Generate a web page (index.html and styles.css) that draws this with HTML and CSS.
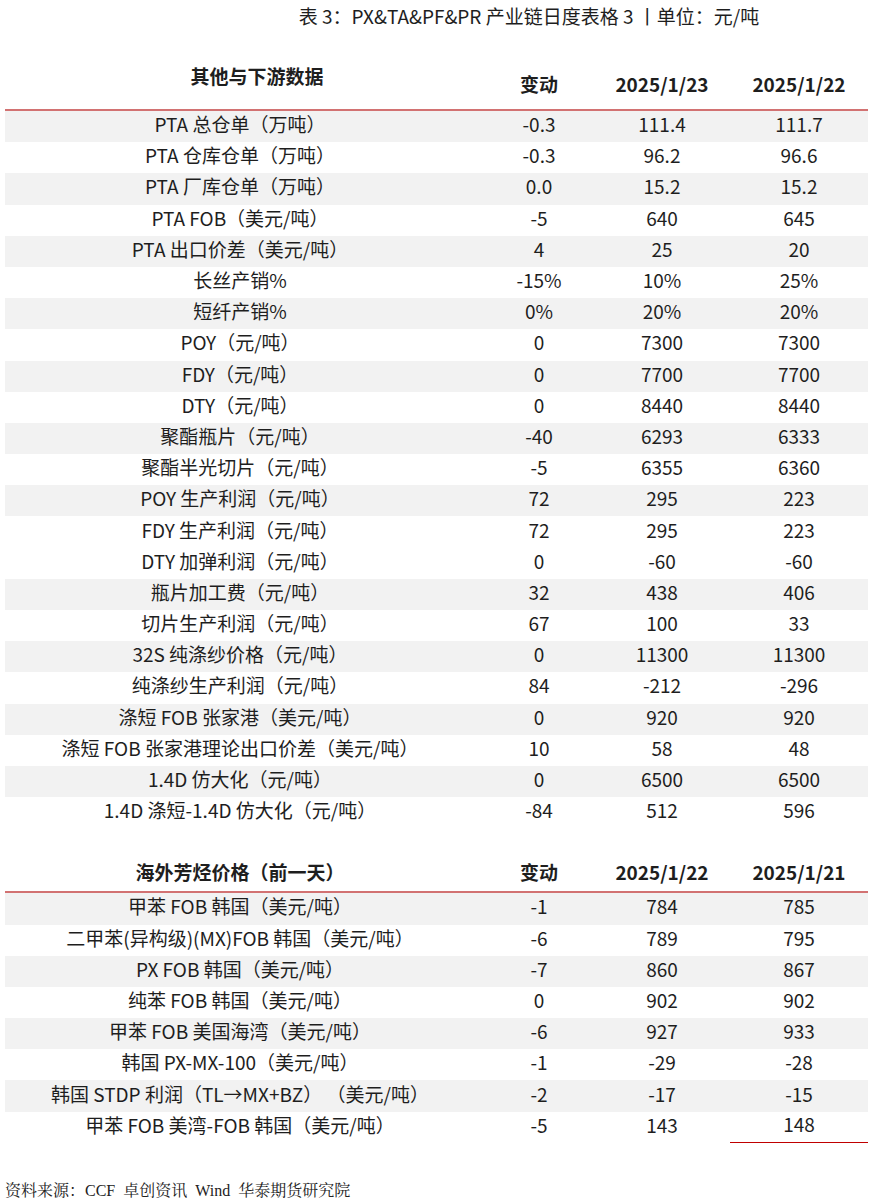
FILE: index.html
```html
<!DOCTYPE html>
<html lang="zh-CN">
<head>
<meta charset="utf-8">
<title>表 3：PX&amp;TA&amp;PF&amp;PR 产业链日度表格 3</title>
<link rel="stylesheet" href="styles.css">
</head>
<body>
<div class="page">
  <div class="title">表 3：PX&amp;TA&amp;PF&amp;PR 产业链日度表格 3 丨单位：元/吨</div>

  <div class="table">
    <div class="head head-first">
      <div class="c c1 label-raised">其他与下游数据</div>
      <div class="c c2">变动</div>
      <div class="c c3">2025/1/23</div>
      <div class="c c4">2025/1/22</div>
    </div>
    <div class="row shade"><div class="c c1">PTA 总仓单（万吨）</div><div class="c c2">-0.3</div><div class="c c3">111.4</div><div class="c c4">111.7</div></div>
    <div class="row"><div class="c c1">PTA 仓库仓单（万吨）</div><div class="c c2">-0.3</div><div class="c c3">96.2</div><div class="c c4">96.6</div></div>
    <div class="row shade"><div class="c c1">PTA 厂库仓单（万吨）</div><div class="c c2">0.0</div><div class="c c3">15.2</div><div class="c c4">15.2</div></div>
    <div class="row"><div class="c c1">PTA FOB（美元/吨）</div><div class="c c2">-5</div><div class="c c3">640</div><div class="c c4">645</div></div>
    <div class="row shade"><div class="c c1">PTA 出口价差（美元/吨）</div><div class="c c2">4</div><div class="c c3">25</div><div class="c c4">20</div></div>
    <div class="row"><div class="c c1">长丝产销%</div><div class="c c2">-15%</div><div class="c c3">10%</div><div class="c c4">25%</div></div>
    <div class="row shade"><div class="c c1">短纤产销%</div><div class="c c2">0%</div><div class="c c3">20%</div><div class="c c4">20%</div></div>
    <div class="row"><div class="c c1">POY（元/吨）</div><div class="c c2">0</div><div class="c c3">7300</div><div class="c c4">7300</div></div>
    <div class="row shade"><div class="c c1">FDY（元/吨）</div><div class="c c2">0</div><div class="c c3">7700</div><div class="c c4">7700</div></div>
    <div class="row"><div class="c c1">DTY（元/吨）</div><div class="c c2">0</div><div class="c c3">8440</div><div class="c c4">8440</div></div>
    <div class="row shade"><div class="c c1">聚酯瓶片（元/吨）</div><div class="c c2">-40</div><div class="c c3">6293</div><div class="c c4">6333</div></div>
    <div class="row"><div class="c c1">聚酯半光切片（元/吨）</div><div class="c c2">-5</div><div class="c c3">6355</div><div class="c c4">6360</div></div>
    <div class="row shade"><div class="c c1">POY 生产利润（元/吨）</div><div class="c c2">72</div><div class="c c3">295</div><div class="c c4">223</div></div>
    <div class="row"><div class="c c1">FDY 生产利润（元/吨）</div><div class="c c2">72</div><div class="c c3">295</div><div class="c c4">223</div></div>
    <div class="row"><div class="c c1">DTY 加弹利润（元/吨）</div><div class="c c2">0</div><div class="c c3">-60</div><div class="c c4">-60</div></div>
    <div class="row shade"><div class="c c1">瓶片加工费（元/吨）</div><div class="c c2">32</div><div class="c c3">438</div><div class="c c4">406</div></div>
    <div class="row"><div class="c c1">切片生产利润（元/吨）</div><div class="c c2">67</div><div class="c c3">100</div><div class="c c4">33</div></div>
    <div class="row shade"><div class="c c1">32S 纯涤纱价格（元/吨）</div><div class="c c2">0</div><div class="c c3">11300</div><div class="c c4">11300</div></div>
    <div class="row"><div class="c c1">纯涤纱生产利润（元/吨）</div><div class="c c2">84</div><div class="c c3">-212</div><div class="c c4">-296</div></div>
    <div class="row shade"><div class="c c1">涤短 FOB 张家港（美元/吨）</div><div class="c c2">0</div><div class="c c3">920</div><div class="c c4">920</div></div>
    <div class="row"><div class="c c1">涤短 FOB 张家港理论出口价差（美元/吨）</div><div class="c c2">10</div><div class="c c3">58</div><div class="c c4">48</div></div>
    <div class="row shade"><div class="c c1">1.4D 仿大化（元/吨）</div><div class="c c2">0</div><div class="c c3">6500</div><div class="c c4">6500</div></div>
    <div class="row"><div class="c c1">1.4D 涤短-1.4D 仿大化（元/吨）</div><div class="c c2">-84</div><div class="c c3">512</div><div class="c c4">596</div></div>

    <div class="head head-second">
      <div class="c c1">海外芳烃价格（前一天）</div>
      <div class="c c2">变动</div>
      <div class="c c3">2025/1/22</div>
      <div class="c c4">2025/1/21</div>
    </div>
    <div class="row shade"><div class="c c1">甲苯 FOB 韩国（美元/吨）</div><div class="c c2">-1</div><div class="c c3">784</div><div class="c c4">785</div></div>
    <div class="row"><div class="c c1">二甲苯(异构级)(MX)FOB 韩国（美元/吨）</div><div class="c c2">-6</div><div class="c c3">789</div><div class="c c4">795</div></div>
    <div class="row shade"><div class="c c1">PX FOB 韩国（美元/吨）</div><div class="c c2">-7</div><div class="c c3">860</div><div class="c c4">867</div></div>
    <div class="row"><div class="c c1">纯苯 FOB 韩国（美元/吨）</div><div class="c c2">0</div><div class="c c3">902</div><div class="c c4">902</div></div>
    <div class="row shade"><div class="c c1">甲苯 FOB 美国海湾（美元/吨）</div><div class="c c2">-6</div><div class="c c3">927</div><div class="c c4">933</div></div>
    <div class="row"><div class="c c1">韩国 PX-MX-100（美元/吨）</div><div class="c c2">-1</div><div class="c c3">-29</div><div class="c c4">-28</div></div>
    <div class="row shade"><div class="c c1">韩国 STDP 利润（TL→MX+BZ）&nbsp;（美元/吨）</div><div class="c c2">-2</div><div class="c c3">-17</div><div class="c c4">-15</div></div>
    <div class="row"><div class="c c1">甲苯 FOB 美湾-FOB 韩国（美元/吨）</div><div class="c c2">-5</div><div class="c c3">143</div><div class="c c4 underline">148</div></div>
  </div>

  <div class="source">资料来源：CCF&nbsp; 卓创资讯&nbsp; Wind&nbsp; 华泰期货研究院</div>
</div>
</body>
</html>
```

FILE: styles.css
```css
html, body {
  margin: 0;
  padding: 0;
  background: #ffffff;
}

.page {
  width: 875px;
  font-family: "Noto Sans CJK SC", "Noto Sans", sans-serif;
  color: #1e1e1e;
}

.title {
  height: 32px;
  line-height: 32px;
  padding-left: 183px;
  text-align: center;
  font-size: 19px;
  font-weight: 400;
}

.table {
  margin: 0 7px 0 5px;
  display: flex;
  flex-direction: column;
}

.row,
.head {
  display: grid;
  grid-template-columns: 470px 128px 127px 138px;
  font-size: 19px;
  line-height: 24px;
}

.row {
  height: 31.2px;
}

.row.shade {
  background: #f2f2f2;
}

.c {
  display: flex;
  align-items: center;
  justify-content: center;
  white-space: nowrap;
  box-sizing: border-box;
}

.row .c {
  padding-bottom: 5px;
}

.c3 {
  padding-right: 9px;
}

.head {
  font-weight: 700;
  border-bottom: 2px solid #d27272;
}

.head .c {
  align-items: flex-end;
}

.head-first {
  height: 77px;
}

.head-first .c {
  padding-bottom: 13px;
}

.head-first .label-raised {
  padding-bottom: 21px;
  padding-left: 34px;
}

.head-second {
  height: 63px;
}

.head-second .c {
  padding-bottom: 7px;
}

.underline {
  border-bottom: 1px solid #c00000;
}

.source {
  margin-top: 38px;
  padding-left: 5px;
  font-family: "Liberation Serif", "Noto Serif CJK SC", "Noto Sans CJK SC", serif;
  font-size: 16px;
  line-height: 20px;
  color: #222222;
}
```
